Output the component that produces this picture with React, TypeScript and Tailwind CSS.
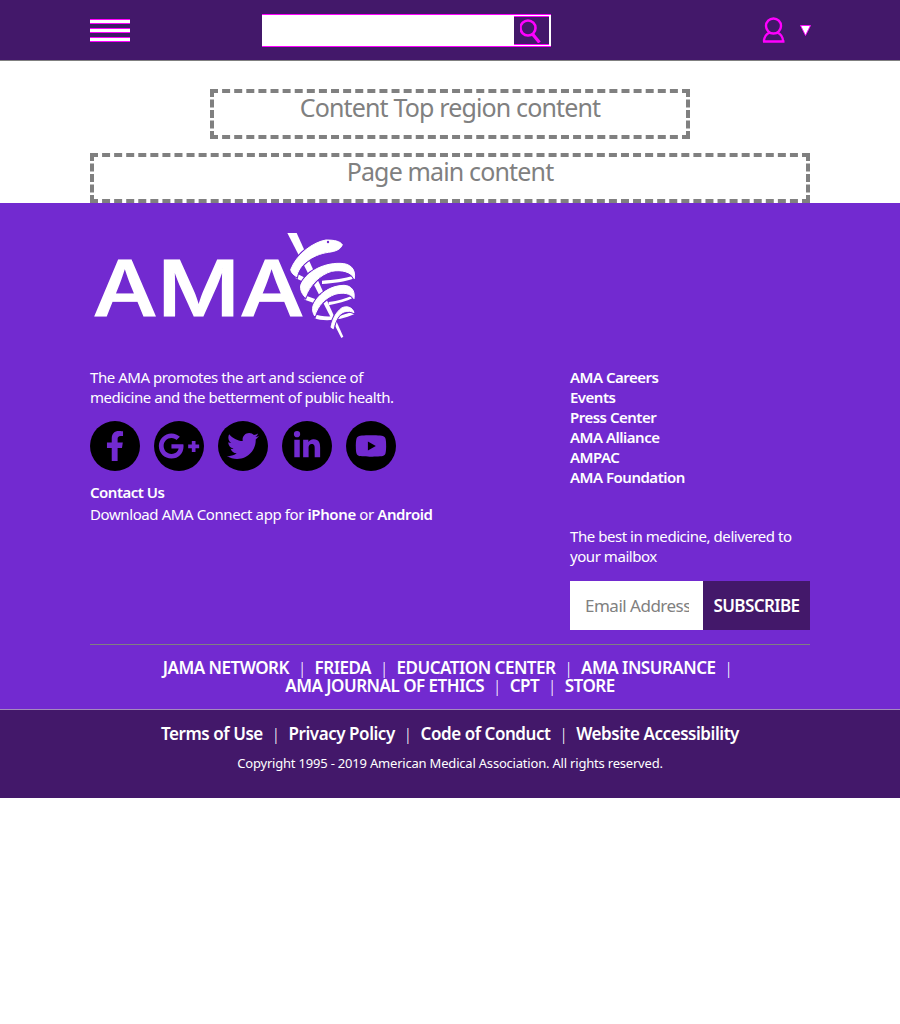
import { FaFacebookF, FaGooglePlusG, FaLinkedinIn, FaTwitter, FaYoutube } from "react-icons/fa";

const font = { fontFamily: '"Noto Sans", sans-serif' };

const socials = [
  { Icon: FaFacebookF, size: "text-[30px]" },
  { Icon: FaGooglePlusG, size: "text-[42px]" },
  { Icon: FaTwitter, size: "text-[32px]" },
  { Icon: FaLinkedinIn, size: "text-[30px]" },
  { Icon: FaYoutube, size: "text-[32px]" },
];
const links = ["AMA Careers", "Events", "Press Center", "AMA Alliance", "AMPAC", "AMA Foundation"];

const snakeBands = [
  "M187 50 C180 40 165 36 138 36 C100 42 50 78 32 125 C34 135 42 142 50 146 C56 112 95 80 145 73 C168 70 182 64 187 50 Z",
  "M76 208 C66 198 60 186 62 172 C76 135 125 105 180 106 C210 106 228 122 223 152 C214 132 185 124 155 130 C120 140 90 170 76 208 Z",
  "M104 264 C98 254 96 244 99 234 C112 200 150 172 192 172 C214 173 226 188 222 212 C212 196 190 192 165 199 C135 210 115 232 104 264 Z",
  "M222 254 C218 238 200 232 185 240 C168 252 157 275 153 298 L160 302 C164 278 176 258 192 252 C204 248 214 250 222 254 Z",
];

function Bar() {
  return <div className="h-[5px] w-10 bg-white border-y border-[#ff00ff]" />;
}

function Sep() {
  return <span className="font-light mx-[4.5px]">|</span>;
}

function Logo() {
  return (
    <svg viewBox="0 0 270 115" className="h-[115px] w-[270px]">
      <text x="3" y="86" fill="#fff" stroke="#fff" strokeWidth="1.2" fontFamily="Inter" fontWeight="500" fontSize="77" textLength="211" lengthAdjust="spacingAndGlyphs">
        AMA
      </text>
      <g transform="translate(190 -2) scale(0.3333)" fill="#fff">
        <path d="M22 15 L50 15 L190 326 L184 330 Z" />
        <path d="M48 136 L87 155 L83 167 L46 150 Z" />
        <path d="M74 202 L114 216 L110 228 L74 215 Z" />
        <path d="M224 150 C195 162 160 166 126 168 L126 158 C160 156 195 152 222 142 Z" />
        <path d="M224 208 C195 222 175 226 146 232 L146 222 C175 218 195 212 222 200 Z" />
        <path d="M102 258 C130 270 180 268 224 248 L224 258 C180 278 130 282 102 270 Z" />
        {snakeBands.map((d) => (
          <path key={d} d={d} stroke="#722ad0" strokeWidth="9" />
        ))}
        {snakeBands.map((d) => (
          <path key={d} d={d} stroke="#fff" strokeWidth="3" />
        ))}
      </g>
      <circle cx="238" cy="12" r="1.2" fill="#722ad0" />
    </svg>
  );
}

export default function App() {
  return (
    <div className="bg-white text-white" style={font}>
      <header className="h-[61px] border-b border-[#808080] bg-[#43186a] px-[90px] flex items-center justify-between">
        <div className="flex flex-col gap-1">
          <Bar />
          <Bar />
          <Bar />
        </div>
        <div className="ml-[132px] h-[33px] w-[289px] flex justify-end bg-white border-y border-[#ff00ff] py-px pr-0.5">
          <div className="w-[35px] bg-[#43186a] border-y border-[#ff00ff] flex items-center justify-center">
            <svg viewBox="0 0 24 26" className="w-[24px] h-[26px]" fill="none" stroke="#ff00ff">
              <circle cx="8" cy="11" r="7.5" strokeWidth="2.6" />
              <path d="M12.5 17 L19.5 25.5" strokeWidth="3.2" />
            </svg>
          </div>
        </div>
        <div className="flex items-center gap-[14px] ml-auto -mr-px">
          <svg viewBox="0 0 24 26" className="w-6 h-[26px]" fill="none" stroke="#ff00ff" strokeWidth="2.4">
            <circle cx="11.5" cy="9" r="7.5" />
            <path d="M2 24.5 C2 20 4 17 8 15.5 M21 24.5 C21 20 19 17 15 15.5 M1 24.5 H22.5" />
          </svg>
          <svg viewBox="0 0 11 11" className="w-[11px] h-[11px]">
            <path d="M0.5 0.5 H10.5 L5.5 10.5 Z" fill="#fff" stroke="#ff00ff" strokeWidth="0.9" />
          </svg>
        </div>
      </header>
      <main className="pt-7">
        <div className="mx-auto w-[480px] h-[50px] border-4 border-dashed border-[#808080] text-center text-[25px] leading-[29px] text-[#808080] tracking-[-0.85px]">
          Content Top region content
        </div>
        <div className="mx-[90px] mt-3.5 h-[50px] border-4 border-dashed border-[#808080] text-center text-[25px] leading-[29px] text-[#808080] tracking-[-0.85px]">
          Page main content
        </div>
      </main>
      <footer className="bg-[#722ad0]">
        <div className="px-[90px] pt-[27px]">
          <Logo />
          <div className="flex justify-between mt-[22px]">
            <div>
              <p className="text-[15px] leading-5 tracking-[-0.45px]">
                The AMA promotes the art and science of
                <br />
                medicine and the betterment of public health.
              </p>
              <div className="flex gap-3.5 mt-[14px]">
                {socials.map(({ Icon, size }, i) => (
                  <div key={i} className={`w-[50px] h-[50px] rounded-full bg-black flex items-center justify-center text-[#722ad0] ${size}`}>
                    <Icon />
                  </div>
                ))}
              </div>
              <p className="mt-[11px] text-[15px] leading-5 font-semibold tracking-[-0.5px]">Contact Us</p>
              <p className="mt-0.5 text-[15px] leading-5 tracking-[-0.4px]">
                Download AMA Connect app for <span className="font-semibold">iPhone</span> or <span className="font-semibold">Android</span>
              </p>
            </div>
            <div className="w-60">
              <ul className="text-[15px] leading-5 font-semibold tracking-[-0.5px]">
                {links.map((l) => (
                  <li key={l}>{l}</li>
                ))}
              </ul>
              <p className="mt-[39px] text-[15px] leading-5 tracking-[-0.45px]">The best in medicine, delivered to your mailbox</p>
              <div className="flex mt-[15px] h-[49px]">
                <div className="w-[133px] bg-white">
                  <input placeholder="Email Address" className="w-full h-full pl-[15px] pr-3.5 text-[17px] tracking-[-0.5px] outline-none placeholder:text-[#808080] text-[#808080]" />
                </div>
                <div className="flex-1 bg-[#43186a] flex items-center justify-center font-semibold text-[17px] tracking-[-0.6px]">SUBSCRIBE</div>
              </div>
            </div>
          </div>
          <div className="mt-3.5 border-t border-[#808080] pt-[14px] pb-3.5 text-center text-[17px] leading-[18px] font-semibold tracking-[-0.5px]">
            <p>
              JAMA NETWORK <Sep /> FRIEDA <Sep /> EDUCATION CENTER <Sep /> AMA INSURANCE <Sep />
            </p>
            <p>
              AMA JOURNAL OF ETHICS <Sep /> CPT <Sep /> STORE
            </p>
          </div>
        </div>
        <div className="h-[89px] bg-[#43186a] border-t border-[#a58bbd] text-center pt-[13px]">
          <p className="text-[17px] leading-[22px] font-semibold tracking-[-0.45px]">
            Terms of Use <Sep /> Privacy Policy <Sep /> Code of Conduct <Sep /> Website Accessibility
          </p>
          <p className="mt-2 text-[13px] leading-5 tracking-[-0.2px]">Copyright 1995 - 2019 American Medical Association. All rights reserved.</p>
        </div>
      </footer>
    </div>
  );
}
